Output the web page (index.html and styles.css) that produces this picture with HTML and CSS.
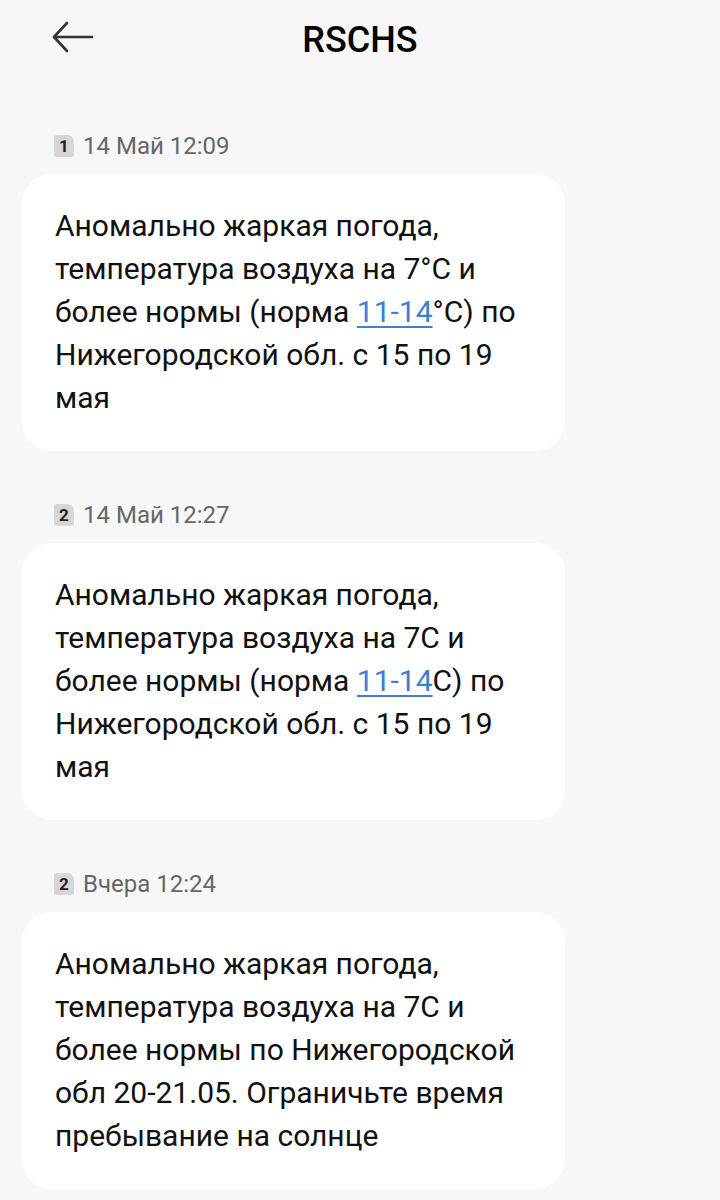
FILE: index.html
```html
<!DOCTYPE html>
<html lang="ru">
<head>
    <meta charset="UTF-8">
    <meta name="viewport" content="width=device-width, initial-scale=1.0">
    <title>RSCHS</title>
    <link rel="stylesheet" href="styles.css">
</head>
<body>
    <header class="topbar">
        <button class="topbar__back" aria-label="Назад">
            <svg width="42" height="32" viewBox="0 0 42 32" fill="none" stroke="#333" stroke-width="2.6" stroke-linecap="round" stroke-linejoin="round">
                <path d="M2 16 H40"/>
                <path d="M15 2 L2 16 L15 30"/>
            </svg>
        </button>
        <h1 class="topbar__title">RSCHS</h1>
    </header>

    <main class="thread">
        <section class="message">
            <div class="message__meta"><span class="sim">1</span>14 Май 12:09</div>
            <div class="message__bubble">Аномально жаркая погода, температура воздуха на 7°C и более нормы (норма <a href="#">11-14</a>°C) по Нижегородской обл. с 15 по 19 мая</div>
        </section>

        <section class="message">
            <div class="message__meta"><span class="sim">2</span>14 Май 12:27</div>
            <div class="message__bubble">Аномально жаркая погода, температура воздуха на 7C и более нормы (норма <a href="#">11-14</a>C) по Нижегородской обл. с 15 по 19 мая</div>
        </section>

        <section class="message">
            <div class="message__meta"><span class="sim">2</span>Вчера 12:24</div>
            <div class="message__bubble">Аномально жаркая погода, температура воздуха на 7C и более нормы по Нижегородской обл 20-21.05. Ограничьте время пребывание на солнце</div>
        </section>
    </main>
</body>
</html>
```

FILE: styles.css
```css
* {
    box-sizing: border-box;
    margin: 0;
    padding: 0;
}

body {
    background-color: #f7f7f7;
    font-family: Roboto, "Noto Sans", sans-serif;
    color: #111;
}

.topbar {
    position: relative;
    height: 80px;
    display: flex;
    align-items: center;
    justify-content: center;
}

.topbar__back {
    position: absolute;
    left: 52px;
    top: 21px;
    background: none;
    border: none;
    display: flex;
}

.topbar__title {
    font-size: 36px;
    font-weight: 500;
    color: #000;
}

.thread {
    padding: 51px 155px 0 22px;
    display: flex;
    flex-direction: column;
    gap: 49px;
}

.message__meta {
    display: flex;
    align-items: center;
    padding-left: 32px;
    font-size: 24px;
    color: #666;
    height: 30px;
    margin-bottom: 13px;
}

.sim {
    width: 20px;
    height: 22px;
    margin-right: 9px;
    background-color: #d6d6d6;
    color: #222;
    font-size: 17px;
    font-weight: 700;
    display: flex;
    align-items: center;
    justify-content: center;
    border-radius: 3px 7px 3px 3px;
}

.message__bubble {
    background-color: #fff;
    border-radius: 30px;
    padding: 30px 28px 32px 33px;
    font-size: 30px;
    line-height: 43px;
    color: #111;
}

.message__bubble a {
    color: #3b7fd8;
    text-decoration: underline;
    text-decoration-thickness: 1.5px;
    text-underline-offset: 4px;
}
```
